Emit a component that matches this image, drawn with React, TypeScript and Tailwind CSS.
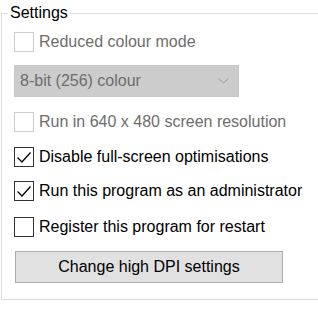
import React from 'react'

function Box({ checked, disabled }: { checked?: boolean; disabled?: boolean }) {
  return (
    <span className={`flex h-[20px] w-[20px] shrink-0 items-center justify-center border bg-white ${disabled ? 'border-[#cccccc]' : 'border-[#333333]'}`}>
      {checked && (
        <svg width="18" height="18" viewBox="0 0 18 18" fill="none">
          <polyline points="2.5,9.5 7,14 15.5,4.5" stroke="#000" strokeWidth="1.3" />
        </svg>
      )}
    </span>
  )
}

function Check({ label, checked, disabled, className }: { label: string; checked?: boolean; disabled?: boolean; className?: string }) {
  return (
    <label className={`flex h-[20px] items-center gap-[5px] ${className ?? ''}`}>
      <Box checked={checked} disabled={disabled} />
      <span className={disabled ? 'text-[#6d6d6d]' : 'text-black'}>{label}</span>
    </label>
  )
}

export default function App() {
  return (
    <div className="h-[312px] w-[318px] bg-white pl-[1px] text-[16px] leading-[20px]" style={{ fontFamily: '"Liberation Sans", Arial, sans-serif' }}>
      <fieldset className="h-[300px] border border-r-0 border-[#dcdcdc] p-0">
        <legend className="ml-[6px] px-[2px] leading-[26px] text-black">Settings</legend>
        <div className="flex flex-col pl-[12px] pt-[6px]">
          <Check label="Reduced colour mode" disabled />
          <div className="mt-[13px] flex h-[32px] w-[225px] items-center justify-between border border-[#c6c6c6] bg-[#cccccc] pl-[5px] pr-[9px] text-[#6d6d6d]">
            <span>8-bit (256) colour</span>
            <svg width="11" height="6" viewBox="0 0 11 6" fill="none">
              <polyline points="0.5,0.5 5.5,5 10.5,0.5" stroke="#9a9a9a" strokeWidth="1" />
            </svg>
          </div>
          <Check label="Run in 640 x 480 screen resolution" disabled className="mt-[15px]" />
          <Check label="Disable full-screen optimisations" checked className="mt-[15px]" />
          <Check label="Run this program as an administrator" checked className="mt-[14px]" />
          <Check label="Register this program for restart" className="mt-[16px]" />
          <button className="ml-[1px] mt-[14px] h-[32px] w-[268px] border border-[#adadad] bg-[#e1e1e1] text-center text-black">
            Change high DPI settings
          </button>
        </div>
      </fieldset>
    </div>
  )
}
